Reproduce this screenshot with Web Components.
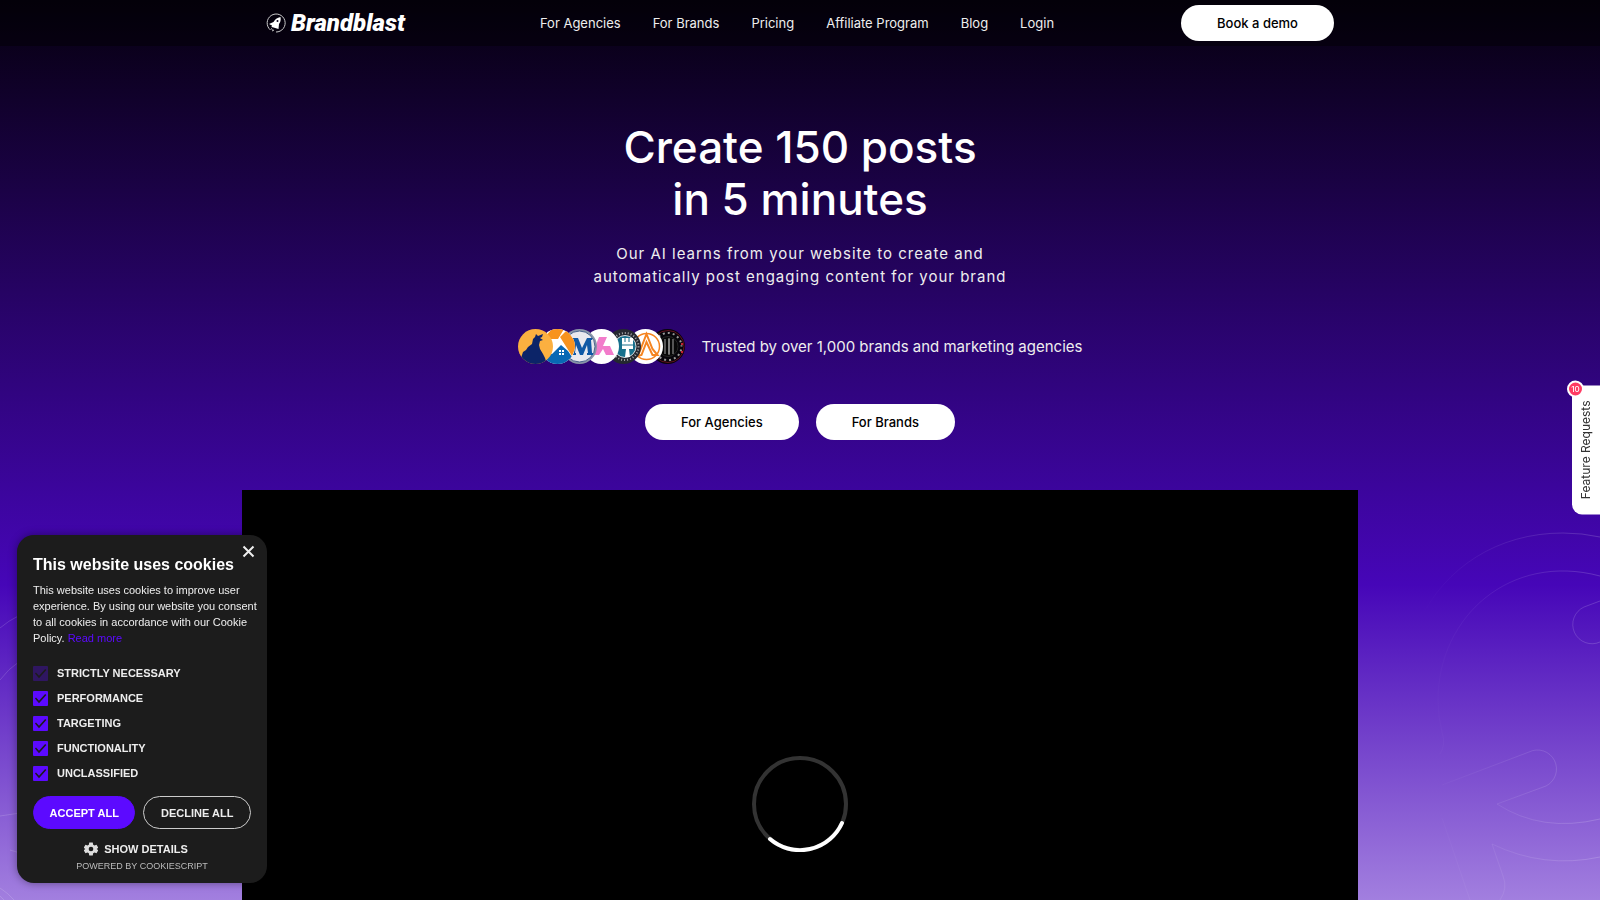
<!DOCTYPE html>
<html lang="en">
<head>
<meta charset="utf-8">
<meta name="viewport" content="width=device-width, initial-scale=1">
<title>Brandblast</title>
<style>
    body {
        margin: 0;
        background: #000;
        color: #fff;
        font-family: Inter, "Liberation Sans", sans-serif;
    }
</style>
</head>
<body>
<app-page>
    <app-header slot="header"></app-header>
    <app-hero>
        <app-brands slot="brands">Trusted by over 1,000 brands and marketing agencies</app-brands>
        <app-button slot="actions">For Agencies</app-button>
        <app-button slot="actions">For Brands</app-button>
        <app-video slot="video"></app-video>
    </app-hero>
</app-page>
<app-feedback count="10">Feature Requests</app-feedback>
<app-cookies></app-cookies>

<script>
class Button extends HTMLElement {
    constructor() {
        super();
        this.attachShadow({ mode: "open" });
        this.shadowRoot.innerHTML = `
<style>
    :host {
        display: block;
    }

    button {
        display: block;
        height: 36px;
        padding: 0 36px;
        border: 0;
        border-radius: 18px;
        background: #fff;
        color: #000;
        font: 500 13px/36px Inter, sans-serif;
        white-space: nowrap;
        cursor: pointer;
    }
</style>
<button type="button"><slot></slot></button>`;
    }
}

class Header extends HTMLElement {
    constructor() {
        super();
        this.attachShadow({ mode: "open" });
        this.shadowRoot.innerHTML = `
<style>
    :host {
        display: block;
        background: #0006;
    }

    .header {
        display: flex;
        align-items: center;
        justify-content: space-between;
        max-width: 1068px;
        height: 46px;
        margin: 0 auto;
    }

    a {
        color: inherit;
        text-decoration: none;
    }

    .header__logo {
        display: flex;
        align-items: center;
        gap: 5px;
        padding-right: 8px;
        font: italic 900 24px/28px Roboto, sans-serif;
    }

    nav {
        display: flex;
        gap: 32px;
        color: #eee;
        font-size: 13px;
        line-height: 20px;
    }
</style>
<header class="header">
    <a class="header__logo" href="#">
        <svg width="20" height="20" viewBox="0 0 20 20" aria-hidden="true">
            <path d="M4.500 17A9 9 0 1 1 10 19" fill="none" stroke="#ccc"/>
            <path d="M14.500 4C11 4.500 9 6.500 7.500 9L3 11l3 1.500L5.500 14l2 .5 5 1.500.500-5C14.500 9 15 7 14.500 4z" fill="#fff"/>
            <circle cx="11.500" cy="8" r="1" fill="#09001a"/>
            <path d="M5 15.500l1.500 1M6 18l2-1" stroke="#ccc"/>
        </svg>
        <span>Brandblast</span>
    </a>
    <nav>
        <a href="#">For Agencies</a>
        <a href="#">For Brands</a>
        <a href="#">Pricing</a>
        <a href="#">Affiliate Program</a>
        <a href="#">Blog</a>
        <a href="#">Login</a>
    </nav>
    <app-button>Book a demo</app-button>
</header>`;
    }
}

class Brands extends HTMLElement {
    constructor() {
        super();
        this.attachShadow({ mode: "open" });
        this.shadowRoot.innerHTML = `
<style>
    :host {
        display: flex;
        align-items: center;
        justify-content: center;
        gap: 17px;
        color: #eee;
        font-size: 15px;
        line-height: 24px;
    }

    .brands {
        display: flex;
        isolation: isolate;
    }

    svg {
        width: 35px;
        height: 35px;
        border-radius: 50%;
    }

    svg + svg {
        margin-left: -13px;
    }

    /* each logo lies over the next one */
    svg:nth-child(1) { z-index: 7; }
    svg:nth-child(2) { z-index: 6; }
    svg:nth-child(3) { z-index: 5; }
    svg:nth-child(4) { z-index: 4; }
    svg:nth-child(5) { z-index: 3; }
    svg:nth-child(6) { z-index: 2; }
    svg:nth-child(7) { z-index: 1; }
</style>
<div class="brands" aria-hidden="true">
    <svg viewBox="0 0 35 35">
        <rect width="35" height="35" fill="#fbb040"/>
        <path d="M3 29l2-6 3-2 2-3 4-3 1-5 2-2 1-3 2 2 5-2-1 3-2 1 3 2-3 1-1 4 1 4 3 5 2 4 2 6-12 4z" fill="#0c2468"/>
    </svg>
    <svg viewBox="0 0 35 35">
        <rect width="35" height="35" fill="#fff"/>
        <path d="M3 10L12 0h12l-6 10zM20 8l7-7 10 14-5 12zM0 13l9-1-8 9z" fill="#f7931e"/>
        <path d="M0 27l12-2 9-9 7 6 4 6-10 9H5z" fill="#0868b4"/>
        <path d="M19 21h2v2h-2zM22 21h2v2h-2zM19 24h2v2h-2zM22 24h2v2h-2z" fill="#fff"/>
    </svg>
    <svg viewBox="0 0 35 35">
        <rect width="35" height="35" fill="#8995a8"/>
        <circle cx="17.500" cy="17.500" r="15.500" fill="#e8e8ee" stroke="#46628d"/>
        <path d="M9 26V24h1l2-13h-1V9h5l4 10 5-10h5v2h-1l1 13h1v2h-6v-2h1l-1-8-4 10h-3l-4-10-1 8h1v2z" fill="#0f58a5"/>
    </svg>
    <svg viewBox="0 0 35 35">
        <rect width="35" height="35" fill="#fff"/>
        <path d="M15 8h8l-4 9h7l4 9h-8l-3-6-4 6H8z" fill="#f27ccb"/>
    </svg>
    <svg viewBox="0 0 35 35">
        <rect width="35" height="35" fill="#242830"/>
        <circle cx="19" cy="17.500" r="13.500" fill="none" stroke="#aaa" stroke-width="2" stroke-dasharray="1 2"/>
        <circle cx="19" cy="17.500" r="11" fill="#17708d" stroke="#ddd"/>
        <path d="M16 9h11v11h-4l1 8h-5l1-8h-4z" fill="#fff"/>
        <path d="M16 16h11M19 9v4M23 9v4" stroke="#17708d"/>
    </svg>
    <svg viewBox="0 0 35 35">
        <rect width="35" height="35" fill="#fff"/>
        <circle cx="18.500" cy="17.500" r="13" fill="none" stroke="#f58420" stroke-width="1.500"/>
        <path d="M10 27l8.500-22 6 15 5 6h-5l-6-13-5 13z" fill="#fff" stroke="#f58420" stroke-width="2"/>
    </svg>
    <svg viewBox="0 0 35 35">
        <rect width="35" height="35" fill="#07050a"/>
        <circle cx="18" cy="17.500" r="16" fill="none" stroke="#62121d"/>
        <circle cx="18" cy="17.500" r="13.500" fill="none" stroke="#999" stroke-width="2" stroke-dasharray="2 3" stroke-dashoffset="2"/>
        <circle cx="18" cy="17.500" r="10" fill="#080808" stroke="#252525"/>
        <path d="M15 10v15M19 9v17M23 10v15" stroke="#555" stroke-width="2"/>
        <path d="M19 10v15" stroke="#aaa"/>
        <path d="M32 14v2M32 22v2" stroke="#c42131" stroke-width="2"/>
    </svg>
</div>
<slot></slot>`;
    }
}

class Video extends HTMLElement {
    constructor() {
        super();
        this.attachShadow({ mode: "open" });
        this.shadowRoot.innerHTML = `
<style>
    :host {
        display: grid;
        place-items: center;
        width: 100%;
        max-width: 1116px;
        aspect-ratio: 16 / 9;
        margin: 0 auto;
        background: #000;
    }
</style>
<svg width="96" height="96" viewBox="0 0 96 96" fill="none" stroke-width="4" role="img" aria-label="Loading">
    <circle cx="48" cy="48" r="46" stroke="#333"/>
    <path d="M90 67A46 46 0 0 1 18 83" stroke="#fff" stroke-linecap="round"/>
</svg>`;
    }
}

class Hero extends HTMLElement {
    constructor() {
        super();
        this.attachShadow({ mode: "open" });
        this.shadowRoot.innerHTML = `
<style>
    :host {
        display: block;
        padding-top: 75px;
        text-align: center;
    }

    h1 {
        margin: 0 0 17px;
        font-size: 44px;
        font-weight: 500;
        line-height: 52px;
    }

    p {
        margin: 0 0 41px;
        color: #eee;
        font-size: 15px;
        line-height: 23px;
        letter-spacing: 1px;
    }

    .hero__actions {
        display: flex;
        justify-content: center;
        gap: 17px;
        margin: 40px 0 50px;
    }
</style>
<h1>Create 150 posts<br>in 5 minutes</h1>
<p>Our AI learns from your website to create and<br>automatically post engaging content for your brand</p>
<slot name="brands"></slot>
<div class="hero__actions"><slot name="actions"></slot></div>
<slot name="video"></slot>`;
    }
}

class Page extends HTMLElement {
    constructor() {
        super();
        this.attachShadow({ mode: "open" });
        this.shadowRoot.innerHTML = `
<style>
    :host {
        display: block;
        position: relative;
        height: 100vh;
        overflow: hidden;
        background: linear-gradient(#06000f, #4606b8 65%, #a27fdf);
    }

    main {
        position: relative;
    }

    .page__art {
        position: absolute;
        bottom: 0;
        fill: none;
        stroke: #fff;
    }

    .page__art--left {
        left: 0;
    }

    .page__art--right {
        right: 0;
    }
</style>
<svg class="page__art page__art--left" width="240" height="340" viewBox="0 0 240 340" stroke-opacity=".15" aria-hidden="true">
    <path d="M0 68Q8 61 20 55M0 120Q8 109 20 101M0 256l20-3M10 290l10 3M0 328Q8 333 14 340M0 336l4 4"/>
</svg>
<svg class="page__art page__art--right" width="240" height="400" viewBox="0 0 240 400" aria-hidden="true">
    <defs>
        <linearGradient id="fade" gradientUnits="userSpaceOnUse" x1="60" y1="0" x2="240" y2="0">
            <stop stop-color="#fff" stop-opacity="0"/>
            <stop offset="1" stop-color="#fff" stop-opacity=".17"/>
        </linearGradient>
    </defs>
    <g stroke="url(#fade)">
        <path d="M60 120C85 68 137 33 203 33Q222 33 240 37"/>
        <path d="M240 76C150 52 78 117 78 200Q78 217 82 232Q86 245 80 254"/>
        <path d="M240 101l-16 6a19 19 0 0 0 16 35"/>
        <path d="M82 285l87-33a18 18 0 0 1 17 34l-49 18Q182 333 240 319"/>
        <path d="M82 318l28 82M140 400q8-12 3-24l-11-32q52 25 108 13"/>
    </g>
</svg>
<slot name="header"></slot>
<main><slot></slot></main>`;
    }
}

class Feedback extends HTMLElement {
    constructor() {
        super();
        this.attachShadow({ mode: "open" });
        this.shadowRoot.innerHTML = `
<style>
    :host {
        display: block;
        position: fixed;
        right: 0;
        top: 50%;
        transform: translateY(-50%);
    }

    button {
        display: block;
        width: 28px;
        height: 129px;
        padding: 0;
        border: 0;
        border-radius: 10px 0 0 10px;
        background: #fff;
        color: #333;
        font: 12px/28px Inter, sans-serif;
        white-space: nowrap;
        cursor: pointer;
    }

    .feedback__label {
        display: block;
        width: 28px;
        writing-mode: vertical-rl;
        transform: rotate(180deg);
    }

    .feedback__count {
        position: absolute;
        top: -5px;
        left: -5px;
        width: 13px;
        height: 13px;
        border: 2px solid #fff;
        border-radius: 50%;
        background: #ff3b63;
        color: #fff;
        font: 500 8px/13px Inter, sans-serif;
        text-align: center;
    }
</style>
<button type="button">
    <span class="feedback__label"><slot></slot></span>
    <span class="feedback__count"></span>
</button>`;
    }

    connectedCallback() {
        this.shadowRoot.querySelector(".feedback__count").innerText = this.getAttribute("count");
    }
}

class Cookies extends HTMLElement {
    constructor() {
        super();
        this.attachShadow({ mode: "open" });
        this.shadowRoot.innerHTML = `
<style>
    :host {
        display: block;
        position: fixed;
        left: 17px;
        bottom: 17px;
        box-sizing: border-box;
        width: 250px;
        padding: 20px 16px 9px;
        border-radius: 17px;
        background: #1c1c1c;
        box-shadow: 0 0 8px #0006;
        color: #eee;
        font-family: "Liberation Sans", Arial, sans-serif;
        font-size: 11px;
    }

    button {
        font: inherit;
        color: inherit;
        background: none;
        border: 0;
        padding: 0;
        cursor: pointer;
    }

    .cookies__close {
        position: absolute;
        top: 10px;
        right: 12px;
        width: 13px;
        height: 13px;
    }

    .cookies__close svg {
        display: block;
    }

    h2 {
        margin: 0 0 7px;
        color: #fff;
        font-size: 16px;
        line-height: 20px;
    }

    p {
        margin: 0 0 20px;
        line-height: 16px;
        white-space: nowrap;
    }

    a {
        color: #5c0aff;
        text-decoration: none;
    }

    .cookies__options {
        display: grid;
        gap: 10px;
        margin-bottom: 15px;
    }

    label {
        display: flex;
        align-items: center;
        gap: 9px;
        font-weight: 700;
        line-height: 15px;
        text-transform: uppercase;
    }

    input {
        appearance: none;
        display: grid;
        width: 15px;
        height: 15px;
        margin: 0;
        border-radius: 1px;
        background: #5c0aff;
    }

    input:checked::before {
        content: "";
        background: #1c1c1c;
        clip-path: polygon(13% 50%, 20% 43%, 40% 65%, 81% 20%, 89% 27%, 40% 81%);
    }

    input:disabled {
        opacity: .3;
    }

    .cookies__actions {
        display: grid;
        grid-template-columns: 102fr 107fr;
        gap: 8px;
        margin-bottom: 12px;
        font-weight: 700;
    }

    .cookies__actions button {
        height: 33px;
        border: 1px solid #ccc;
        border-radius: 17px;
    }

    .cookies__actions .cookies__accept {
        background: #5c0aff;
        border-color: #5c0aff;
        color: #fff;
    }

    .cookies__details {
        display: flex;
        align-items: center;
        justify-content: center;
        gap: 6px;
        width: 100%;
        padding-right: 12px;
        font-weight: 700;
        line-height: 16px;
    }

    .cookies__powered {
        padding-top: 1px;
        color: #bbb;
        font-size: 9px;
        line-height: 16px;
        text-align: center;
    }
</style>
<button class="cookies__close" type="button" aria-label="Close">
    <svg width="13" height="13" viewBox="0 0 13 13" stroke="#eee" stroke-width="2"><path d="M1.500 1.500l10 10M11.500 1.500l-10 10"/></svg>
</button>
<h2>This website uses cookies</h2>
<p>This website uses cookies to improve user<br>experience. By using our website you consent<br>to all cookies in accordance with our Cookie<br>Policy. <a href="#">Read more</a></p>
<div class="cookies__options"></div>
<div class="cookies__actions">
    <button class="cookies__accept" type="button">ACCEPT ALL</button>
    <button type="button">DECLINE ALL</button>
</div>
<button class="cookies__details" type="button">
    <svg width="14" height="14" viewBox="0 0 24 24" fill="#ddd" aria-hidden="true"><path fill-rule="evenodd" d="M9 1h6l.7 3.600 2.300 1.300 3.500-1.200 3 5.200L21.700 12l2.800 2.100-3 5.200-3.500-1.200-2.300 1.300L15 23H9l-.7-3.600L6 18.100l-3.500 1.200-3-5.200L2.300 12-.5 9.900l3-5.200L6 5.900l2.300-1.300zM12 8a4 4 0 1 0 0 8 4 4 0 0 0 0-8z"/></svg>
    <span>SHOW DETAILS</span>
</button>
<div class="cookies__powered">POWERED BY COOKIESCRIPT</div>`;
    }

    connectedCallback() {
        const options = ["Strictly necessary", "Performance", "Targeting", "Functionality", "Unclassified"];

        for (const [i, option] of options.entries()) {
            const input = document.createElement("INPUT");
            input.type = "checkbox";
            input.id = `cookies-${i}`;
            input.checked = true;
            input.disabled = i === 0;

            const label = document.createElement("LABEL");
            label.htmlFor = input.id;
            label.append(input, option);

            this.shadowRoot.querySelector(".cookies__options").appendChild(label);
        }
    }
}

customElements.define("app-button", Button);
customElements.define("app-header", Header);
customElements.define("app-brands", Brands);
customElements.define("app-video", Video);
customElements.define("app-hero", Hero);
customElements.define("app-page", Page);
customElements.define("app-feedback", Feedback);
customElements.define("app-cookies", Cookies);
</script>
</body>
</html>
